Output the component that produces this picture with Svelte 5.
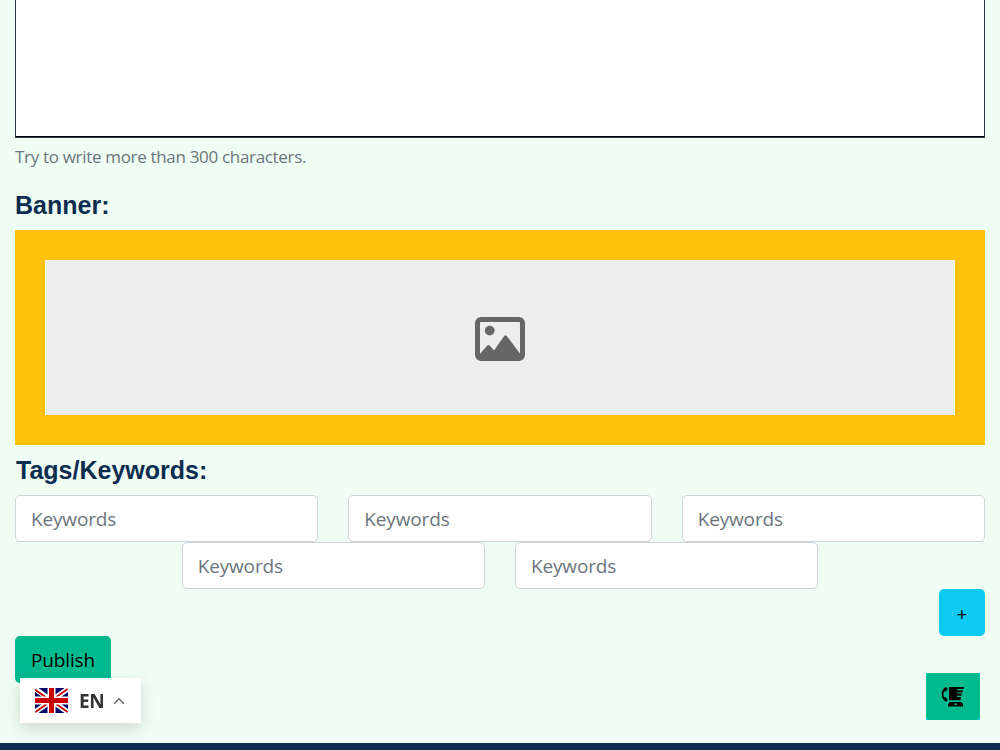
<script>
  const keywordRows = [
    ["", "", ""],
    ["", ""],
  ];

  let language = "EN";
</script>

<main>
  <form on:submit|preventDefault>
    <div class="editor" contenteditable="true"></div>
    <small class="hint"><span>Try to write more than 300 characters.</span></small>

    <h2>Banner:</h2>
    <div class="banner">
      <div class="preview">
        <svg width="50" height="44" viewBox="0 0 50 44">
          <rect x="2.5" y="2.5" width="45" height="39" rx="3.5" fill="none" stroke="#666" stroke-width="5" />
          <circle cx="14.7" cy="13.6" r="4.9" fill="#666" />
          <path d="M4 38 L12.3 28.5 Q13.5 27.4 14.7 28.5 L19 33.4 L29.2 19 Q30.5 17.4 31.8 19 L46 38 V41 H4 Z" fill="#666" />
        </svg>
      </div>
    </div>

    <h2 class="tags">Tags/Keywords:</h2>
    {#each keywordRows as row}
      <div class="row">
        {#each row as keyword}
          <input type="text" placeholder="Keywords" value={keyword} />
        {/each}
      </div>
    {/each}

    <div class="add">
      <button type="button" class="btn plus">+</button>
    </div>
    <button type="submit" class="btn publish"><span>Publish</span></button>
  </form>
</main>

<footer></footer>

<div class="language">
  <svg class="flag" width="33" height="25" viewBox="0 0 33 25">
    <defs>
      <clipPath id="flag-shape"><rect width="33" height="25" rx="2.5" /></clipPath>
    </defs>
    <g clip-path="url(#flag-shape)">
      <rect width="33" height="25" fill="#006" />
      <path d="M-1 0 L34 25 M34 0 L-1 25" stroke="#fff" stroke-width="5.2" />
      <path d="M-1 1 L16 13 M34 0 L17 12 M17 13 L34 25 M16 13 L-1 25" stroke="#c00" stroke-width="1.8" />
      <path d="M16.5 0 V25 M0 12.5 H33" stroke="#fff" stroke-width="8" />
      <path d="M16.5 0 V25 M0 12.5 H33" stroke="#c00" stroke-width="5" />
    </g>
  </svg>
  <span class="code">{language}</span>
  <svg width="12" height="8" viewBox="0 0 12 8">
    <path d="M1 6.7 L6 1.7 L11 6.7" fill="none" stroke="#666" stroke-width="1.4" />
  </svg>
</div>

<div class="contact">
  <button type="button" aria-label="Contact">
    <svg width="24" height="22" viewBox="0 0 24 22">
      <path d="M5.2 1 C-0.8 3 -0.8 13.5 5.2 15.8 L6.7 14 L4.8 11.2 L3.2 11.6 C2.2 9.5 2.2 7.3 3.2 5.2 L4.8 5.6 L6.7 3 Z" />
      <path d="M8 1 H23 L22.4 3 H16 V4.2 H22 L21.4 6.4 H16 V7.6 H20.8 L20.4 9.8 H16 V11 H20 L19.5 14.3 H8 Z" />
      <path d="M9 16 H20 L22 18 V20.5 H7 V18 Z" />
      <rect x="13.3" y="17.4" width="2.4" height="1.7" fill="#00ba8f" />
    </svg>
  </button>
</div>

<style>
  :global(body) {
    background: #effdf5;
    font-family: "Open Sans", "Noto Sans", sans-serif;
    font-size: 19px;
    line-height: 30px;
    overflow: hidden;
  }

  main {
    height: 743px;
    padding: 0 15px;
    box-sizing: border-box;
  }

  .editor {
    height: 138px;
    box-sizing: border-box;
    background: #fff;
    border: 1px solid #26344a;
    border-top: 0;
    box-shadow: inset 0 -1px #000;
  }

  .hint {
    display: block;
    height: 37px;
    padding-top: 5px;
    box-sizing: border-box;
    color: #6c757d;
    font-size: 17px;
    line-height: 28px;
    letter-spacing: -0.32px;
  }

  h2 {
    height: 55px;
    margin: 0;
    padding-top: 15px;
    box-sizing: border-box;
    color: #0d2d50;
    font: bold 25px/30px "Liberation Sans", Arial, sans-serif;
  }

  .tags {
    height: 50px;
    padding: 10px 0 0 1px;
  }

  .banner {
    height: 215px;
    padding: 30px;
    box-sizing: border-box;
    background: #ffc109;
  }

  .preview {
    height: 155px;
    display: flex;
    align-items: center;
    justify-content: center;
    background: #eee;
  }

  .preview svg {
    margin-top: 2px;
  }

  .row {
    display: flex;
    justify-content: center;
    gap: 30px;
  }

  input {
    width: 303.33px;
    height: 47px;
    padding: 7px 15px;
    box-sizing: border-box;
    border: 1px solid #ced4da;
    border-radius: 5px;
    background: #fff;
    font: inherit;
    letter-spacing: -0.15px;
  }

  input::placeholder {
    color: #6c757d;
    opacity: 1;
  }

  .add {
    display: flex;
    justify-content: flex-end;
  }

  .btn {
    height: 47px;
    padding: 0;
    border: 0;
    border-radius: 5px;
    color: #000;
    font: inherit;
  }

  .plus {
    width: 46px;
    padding-top: 3px;
    background: #0dcaf0;
    font-size: 18px;
  }

  .publish {
    display: block;
    width: 96px;
    background: #00ba8f;
    letter-spacing: -0.15px;
  }

  footer {
    height: 7px;
    background: #0d2d50;
  }

  .language {
    position: fixed;
    left: 20px;
    top: 678px;
    width: 121px;
    height: 45px;
    padding-left: 15px;
    box-sizing: border-box;
    display: flex;
    align-items: center;
    background: #fff;
    box-shadow: 0 5px 15px rgba(0, 0, 0, 0.15);
  }

  .code {
    width: 34px;
    margin-left: 11px;
    color: #333;
    font-weight: 700;
    letter-spacing: -0.3px;
  }

  .contact {
    position: fixed;
    left: 926px;
    top: 673px;
    background: #0dcaf0;
  }

  .contact button {
    width: 54px;
    height: 47px;
    padding: 0;
    display: flex;
    align-items: center;
    justify-content: center;
    border: 0;
    border-radius: 4px;
    background: #00ba8f;
  }
</style>
